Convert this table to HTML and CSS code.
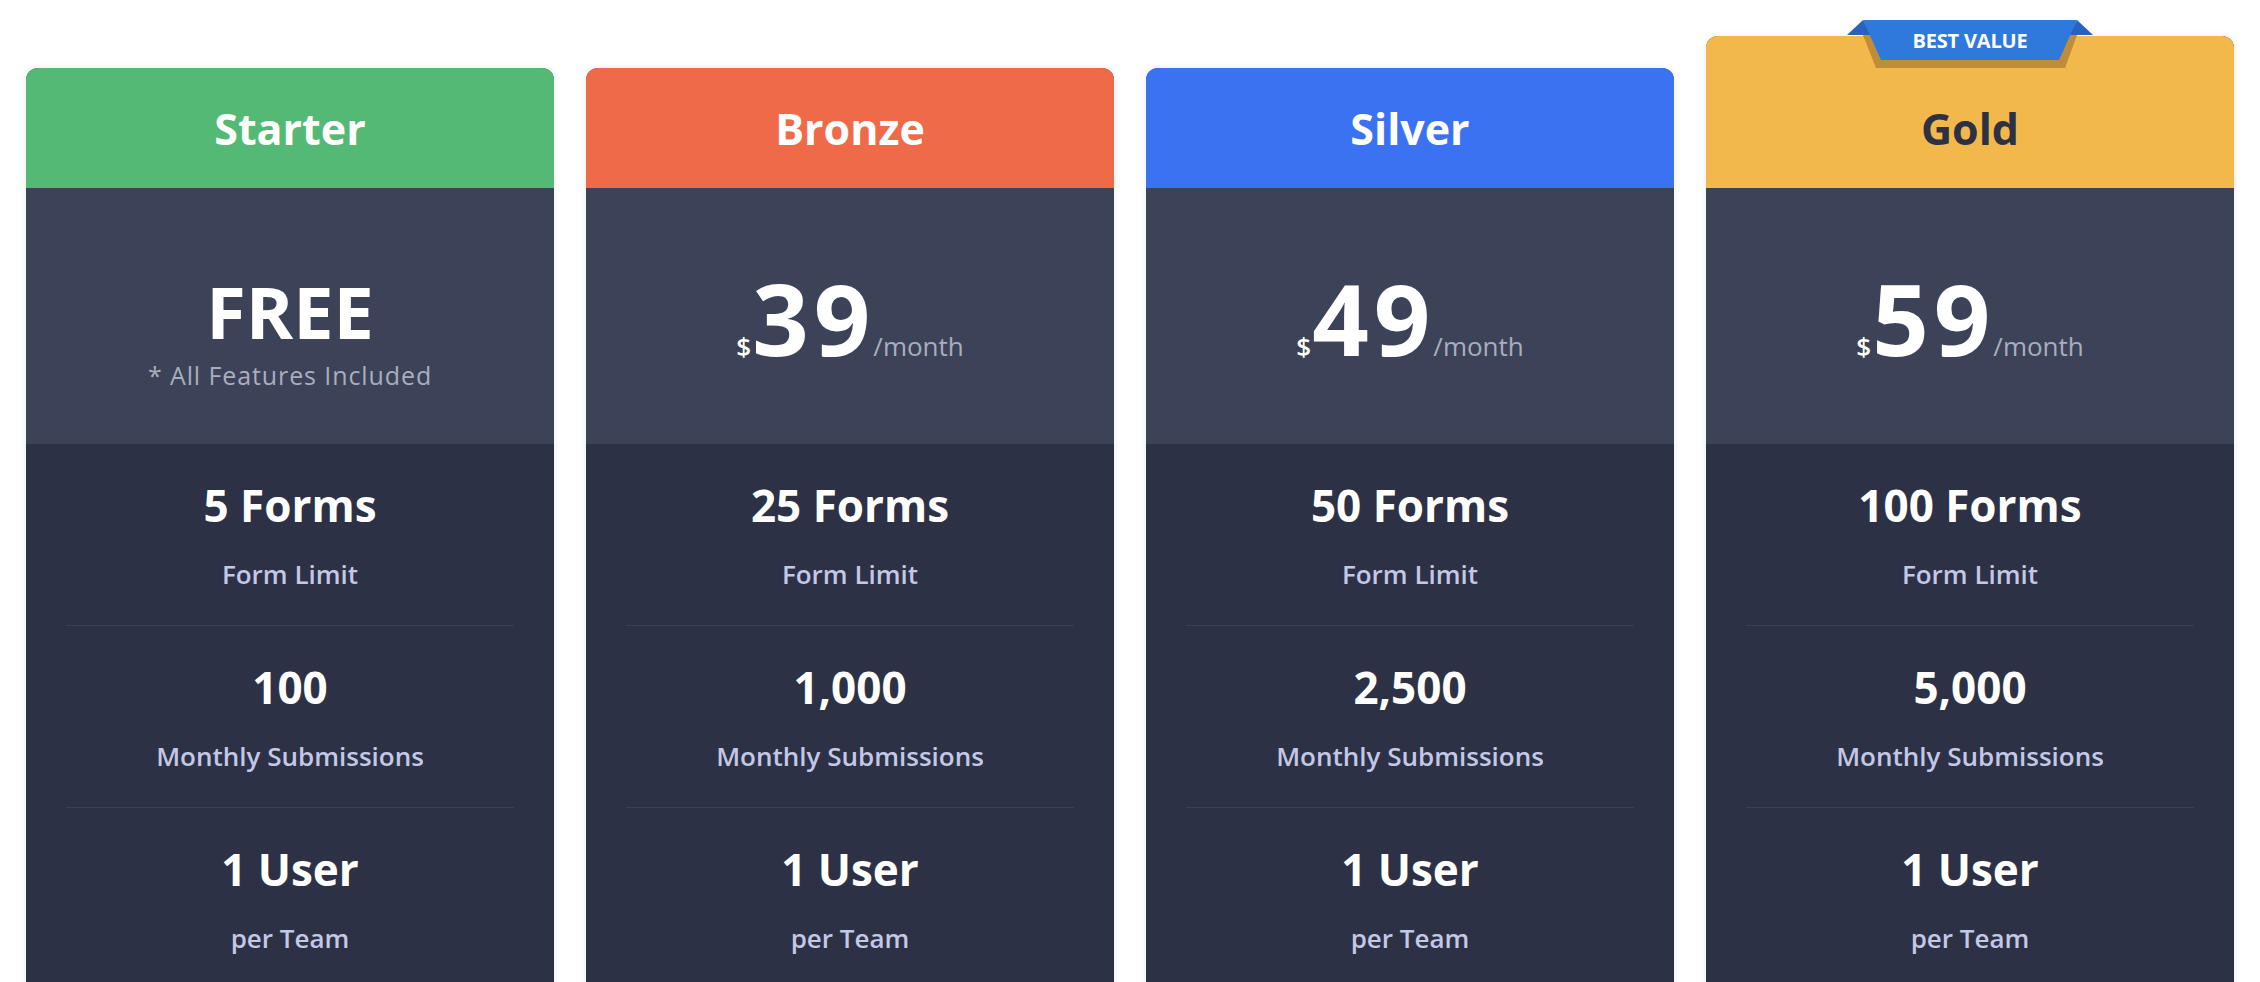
FILE: index.html
```html
<!DOCTYPE html>
<html lang="en">
<head>
<meta charset="utf-8">
<title>Pricing</title>
<link rel="stylesheet" href="styles.css">
</head>
<body>
<main class="plans">
  <section class="card card--starter">
    <header class="card-head"><h2 class="card-title">Starter</h2></header>
    <div class="price price--free">
      <div class="free-label">FREE</div>
      <div class="free-note">* All Features Included</div>
    </div>
    <ul class="features">
      <li class="feature"><span class="feature-value">5 Forms</span><span class="feature-label">Form Limit</span></li>
      <li class="feature"><span class="feature-value">100</span><span class="feature-label">Monthly Submissions</span></li>
      <li class="feature"><span class="feature-value">1 User</span><span class="feature-label">per Team</span></li>
    </ul>
  </section>

  <section class="card card--bronze">
    <header class="card-head"><h2 class="card-title">Bronze</h2></header>
    <div class="price">
      <div class="price-row"><span class="currency">$</span><span class="amount">39</span><span class="period">/month</span></div>
    </div>
    <ul class="features">
      <li class="feature"><span class="feature-value">25 Forms</span><span class="feature-label">Form Limit</span></li>
      <li class="feature"><span class="feature-value">1,000</span><span class="feature-label">Monthly Submissions</span></li>
      <li class="feature"><span class="feature-value">1 User</span><span class="feature-label">per Team</span></li>
    </ul>
  </section>

  <section class="card card--silver">
    <header class="card-head"><h2 class="card-title">Silver</h2></header>
    <div class="price">
      <div class="price-row"><span class="currency">$</span><span class="amount">49</span><span class="period">/month</span></div>
    </div>
    <ul class="features">
      <li class="feature"><span class="feature-value">50 Forms</span><span class="feature-label">Form Limit</span></li>
      <li class="feature"><span class="feature-value">2,500</span><span class="feature-label">Monthly Submissions</span></li>
      <li class="feature"><span class="feature-value">1 User</span><span class="feature-label">per Team</span></li>
    </ul>
  </section>

  <section class="card card--gold card--featured">
    <div class="ribbon">
      <svg class="ribbon-shape" width="246" height="48" viewBox="0 0 246 48" aria-hidden="true">
        <polygon points="0,15 16,0 24,15" fill="#2762bd"/>
        <polygon points="246,15 230,0 222,15" fill="#2762bd"/>
        <polygon points="16,15 230,15 218,48 29,48" fill="#bd8d3a"/>
        <polygon points="16,0 230,0 212,40 34,40" fill="#2f79dc"/>
      </svg>
      <span class="ribbon-label">BEST VALUE</span>
    </div>
    <header class="card-head"><h2 class="card-title">Gold</h2></header>
    <div class="price">
      <div class="price-row"><span class="currency">$</span><span class="amount">59</span><span class="period">/month</span></div>
    </div>
    <ul class="features">
      <li class="feature"><span class="feature-value">100 Forms</span><span class="feature-label">Form Limit</span></li>
      <li class="feature"><span class="feature-value">5,000</span><span class="feature-label">Monthly Submissions</span></li>
      <li class="feature"><span class="feature-value">1 User</span><span class="feature-label">per Team</span></li>
    </ul>
  </section>
</main>
</body>
</html>
```

FILE: styles.css
```css
html, body {
  margin: 0;
  padding: 0;
  background: #ffffff;
  height: 982px;
  overflow: hidden;
}

body {
  font-family: "Open Sans", "Liberation Sans", sans-serif;
  -webkit-font-smoothing: antialiased;
}

.plans {
  display: grid;
  grid-template-columns: repeat(4, 1fr);
  column-gap: 32px;
  padding: 36px 26px 0;
  align-items: start;
}

.card {
  position: relative;
  margin-top: 32px;
  border-radius: 12px 12px 0 0;
  background: #2d3145;
  box-shadow: 0 0 6px rgba(30, 35, 55, 0.10);
}

.card--featured {
  margin-top: 0;
}

.card-head {
  height: 120px;
  display: flex;
  align-items: center;
  justify-content: center;
  border-radius: 12px 12px 0 0;
  padding-top: 1px;
  box-sizing: border-box;
}

.card--featured .card-head {
  height: 152px;
  padding-top: 33px;
}

.card--starter .card-head { background: #54b974; }
.card--bronze .card-head { background: #ee6a48; }
.card--silver .card-head { background: #3b72f1; }
.card--gold .card-head { background: #f3b84b; }

.card-title {
  margin: 0;
  font-size: 43px;
  line-height: 1;
  font-weight: 700;
  color: #ffffff;
}

.card--gold .card-title {
  color: #2c3144;
}

.price {
  height: 256px;
  box-sizing: border-box;
  background: #3c4257;
  display: flex;
  flex-direction: column;
  align-items: center;
  justify-content: center;
  padding-top: 2px;
}

.price--free {
  padding-top: 32px;
}

.free-label {
  font-size: 72px;
  line-height: 1;
  font-weight: 700;
  color: #ffffff;
}

.free-note {
  margin-top: 13px;
  font-size: 25px;
  line-height: 1.2;
  letter-spacing: 0.9px;
  color: #a9aebf;
}

.price-row {
  display: flex;
  align-items: baseline;
  justify-content: center;
  line-height: 1;
}

.currency {
  font-size: 26px;
  font-weight: 600;
  color: #ffffff;
  margin-right: 1px;
}

.amount {
  font-size: 99px;
  font-weight: 700;
  color: #ffffff;
  letter-spacing: 5px;
}

.period {
  font-size: 26px;
  color: #a9aebf;
  margin-left: -2px;
}

.features {
  list-style: none;
  margin: 0;
  padding: 0 40px;
}

.feature {
  display: flex;
  flex-direction: column;
  align-items: center;
  padding: 39px 0 38px;
  border-bottom: 1px solid #3b4055;
}

.feature-value {
  font-size: 44px;
  line-height: 1;
  font-weight: 700;
  color: #ffffff;
}

.feature-label {
  margin-top: 34px;
  font-size: 26px;
  line-height: 1;
  font-weight: 600;
  color: #c3c8e6;
}

.ribbon {
  position: absolute;
  top: -16px;
  left: 50%;
  transform: translateX(-50%);
  width: 246px;
  height: 48px;
  z-index: 2;
}

.ribbon-shape {
  position: absolute;
  left: 0;
  top: 0;
}

.ribbon-label {
  position: relative;
  display: flex;
  height: 40px;
  align-items: center;
  justify-content: center;
  font-size: 20px;
  font-weight: 700;
  color: #ffffff;
  letter-spacing: -0.2px;
}
```
